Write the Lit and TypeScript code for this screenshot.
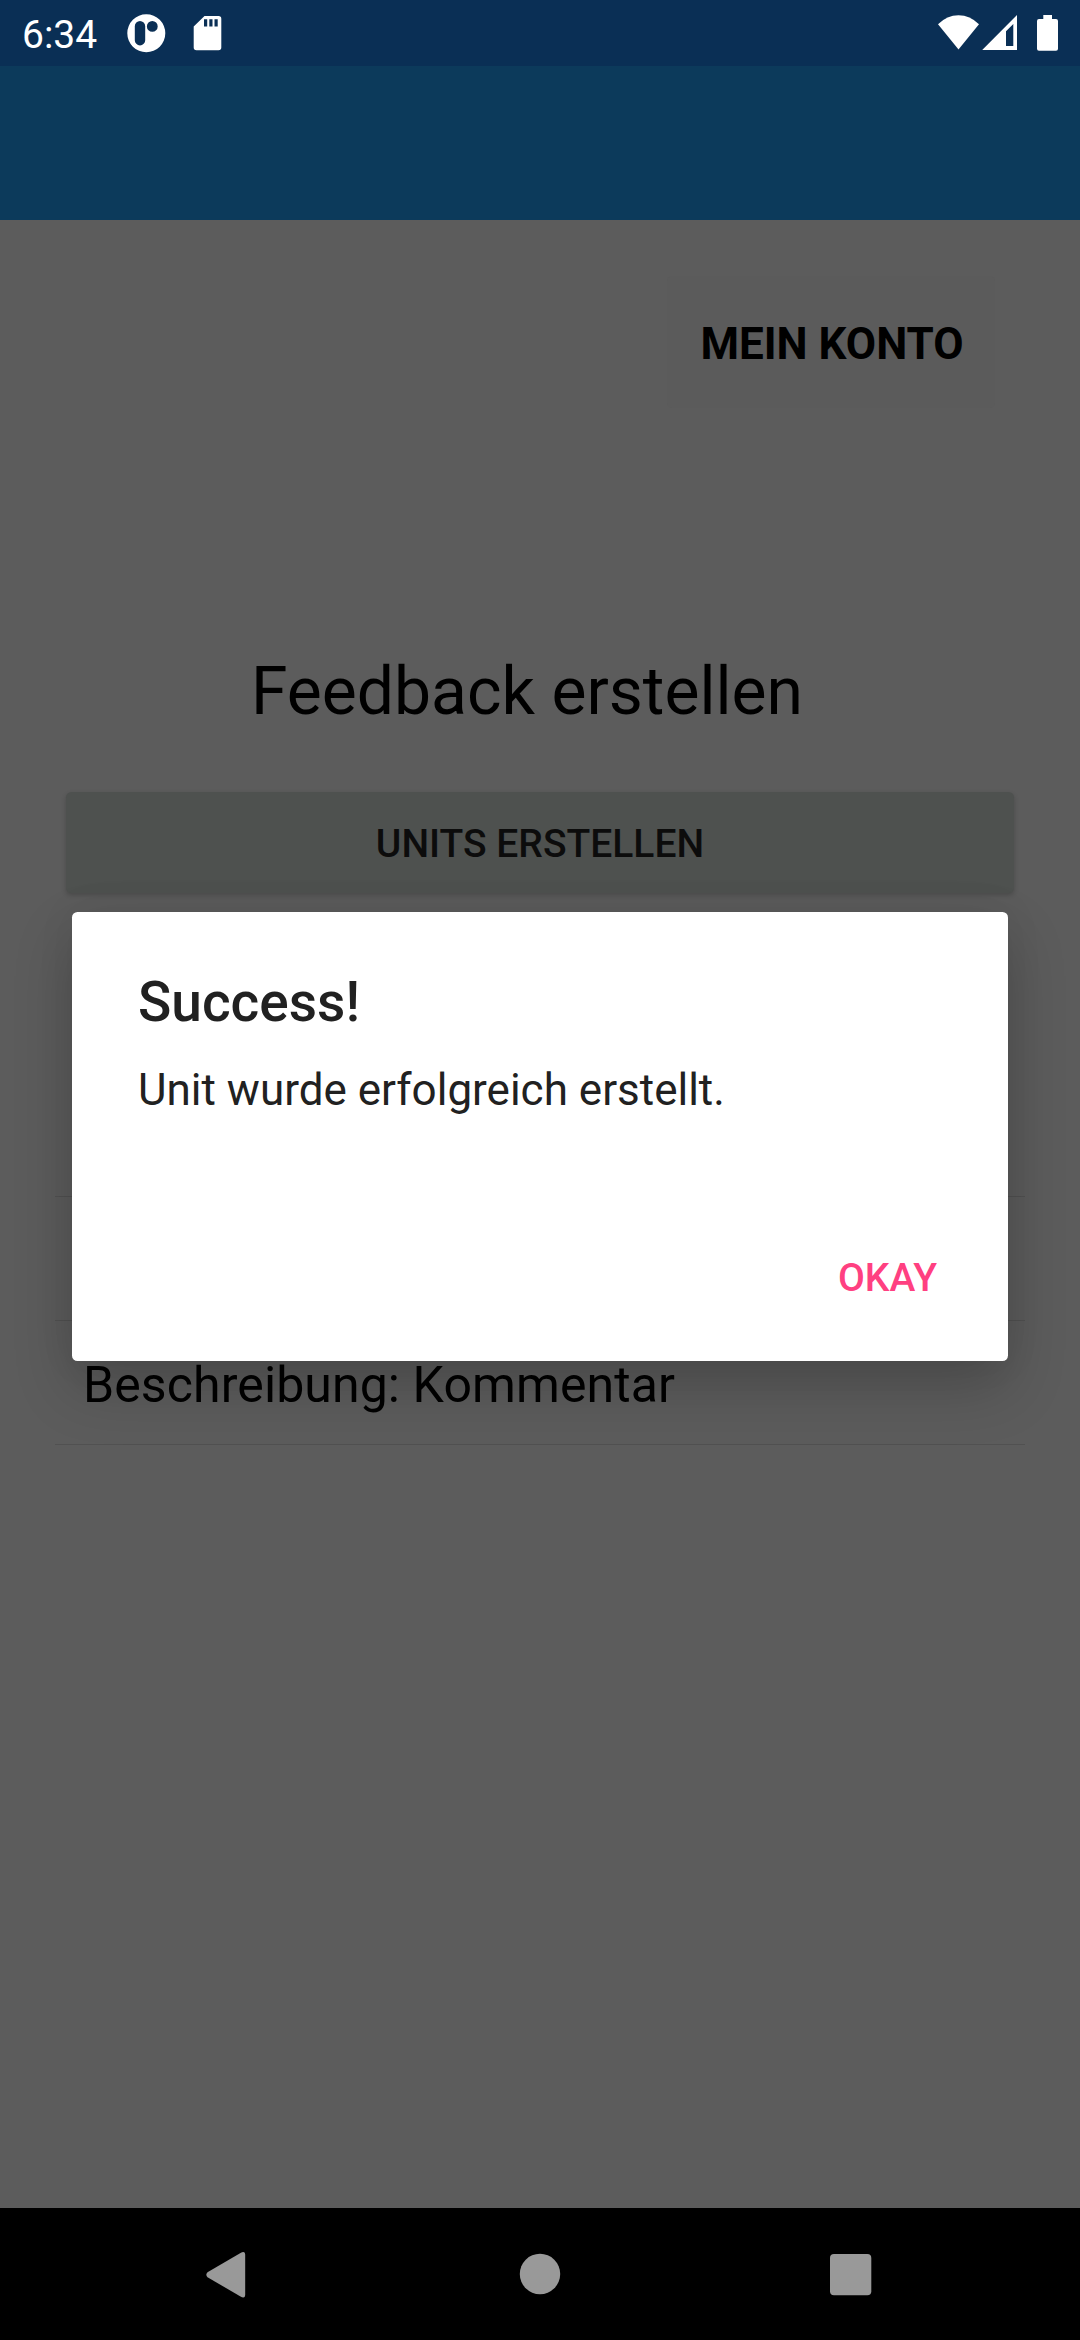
import { LitElement, html, css } from "lit";
import { customElement, property, state } from "lit/decorators.js";

@customElement("status-bar")
class StatusBar extends LitElement {
  static styles = css`
    :host { display: flex; height: 66px; background: #0a2f55; color: #fff; }
    .left, .right { display: flex; align-items: flex-start; }
    .left { flex: 1; padding-left: 22px; }
    .time { font-size: 39px; line-height: 46px; padding-top: 12px; width: 105px; box-sizing: border-box; }
    svg { display: block; height: 66px; fill: #fff; }
  `;
  render() {
    return html`
      <div class="left">
        <span class="time">6:34</span>
        <svg width="100" viewBox="127 0 100 66">
          <path fill-rule="evenodd" d="M146.300 14.300a19 19 0 1 1 0 38a19 19 0 1 1 0-38zM140 21a5.200 5.200 0 0 0-5.200 5.200v14a5.200 5.200 0 0 0 10.400 0v-14a5.200 5.200 0 0 0-5.200-5.200zM152.300 21a5.400 5.400 0 1 0 0 10.800a5.400 5.400 0 0 0 0-10.800z"/>
          <path fill-rule="evenodd" d="M204.500 16H218.500a2.800 2.800 0 0 1 2.800 2.800V47.500a2.800 2.800 0 0 1-2.800 2.800H196.500a2.800 2.800 0 0 1-2.800-2.800V26.500zM204 19.300v7.300h3.200v-7.300zM209.300 19.300v7.300h3.200v-7.300zM214.500 19.300v7.300h3.200v-7.300z"/>
        </svg>
      </div>
      <div class="right">
        <svg width="150" viewBox="930 0 150 66">
          <path d="M938 24.200Q947 15.200 958.500 15.200T979 24.200L958.500 49.500z"/>
          <path fill-rule="evenodd" d="M1017 15V50H982.200zM1013.300 24L1006 31.300V46H1013.300z"/>
          <path d="M1043.300 15h8.700v4h4a2 2 0 0 1 2 2V48.700a2 2 0 0 1-2 2h-17a2 2 0 0 1-2-2V21a2 2 0 0 1 2-2h4.300z"/>
        </svg>
      </div>`;
  }
}

@customElement("nav-bar")
class NavBar extends LitElement {
  static styles = css`
    :host { display: flex; height: 132px; background: #000; }
    svg { display: block; fill: #999; }
  `;
  render() {
    return html`<svg width="1080" height="132" viewBox="0 0 1080 132">
      <path d="M207.500 64.200L240.500 45Q245.200 42.500 245.200 47V86.500Q245.200 91 240.500 88.500L207.500 69.200Q205.200 66.700 207.500 64.200z"/>
      <circle cx="540" cy="66" r="20.200"/>
      <rect x="830" y="46" width="41.300" height="41.300" rx="4"/>
    </svg>`;
  }
}

@customElement("alert-dialog")
class AlertDialog extends LitElement {
  @property() heading = "";
  @property() message = "";
  static styles = css`
    :host {
      display: flex; flex-direction: column; box-sizing: border-box;
      width: 936px; height: 449px; margin-bottom: 1px; background: #fff; border-radius: 5.5px;
      padding: 57px 66px 0; color: #212121;
      box-shadow: 0 26px 60px rgba(0, 0, 0, 0.2), 0 0 40px rgba(0, 0, 0, 0.06);
    }
    .title { font-size: 55px; font-weight: 500; line-height: 66px; }
    .message { font-size: 44px; line-height: 52px; margin-top: 29px; }
    .actions { display: flex; justify-content: flex-end; margin-top: 139px; padding-right: 5px; }
    .action {
      border: 0; background: none; padding: 0; font: 500 39px/46px Roboto, sans-serif;
      color: #ff4081;
    }
  `;
  render() {
    return html`
      <div class="title">${this.heading}</div>
      <div class="message">${this.message}</div>
      <div class="actions">
        <button class="action" @click=${() => this.dispatchEvent(new Event("dismiss"))}>OKAY</button>
      </div>`;
  }
}

@customElement("app-root")
class AppRoot extends LitElement {
  @state() private open = true;
  private rows = ["", "", "Beschreibung: Kommentar"];

  static styles = css`
    :host {
      display: flex; flex-direction: column; width: 1080px; height: 2340px;
      font-family: Roboto, sans-serif; color: #000;
    }
    .window { flex: 1; position: relative; display: flex; flex-direction: column; background: #5c5c5c; }
    .toolbar { height: 154px; background: #0c3a5b; }
    .content { display: flex; flex-direction: column; padding: 56px 55px 0; }
    .account {
      align-self: flex-end; margin-right: 30px; width: 328px; height: 132px; padding: 4px 0 0 2px;
      box-sizing: border-box; border: 0; border-radius: 5px; background: #5b5b5b; color: #000;
      font: 700 44px/52px Roboto, sans-serif;
    }
    .headline { margin: 245px 26px 0 0; font-size: 66px; font-weight: 400; line-height: 78px; text-align: center; }
    .create {
      margin: 61px 11px 0; height: 101px; padding: 3px 0 0; border: 0; border-radius: 5.5px;
      background: #4e514f; color: #0c0c0c; font: 500 39px/46px Roboto, sans-serif;
      box-shadow: 0 2px 5px rgba(0, 0, 0, 0.2);
    }
    .list { margin-top: 180px; display: flex; flex-direction: column; }
    .row {
      height: 124px; box-sizing: border-box; border-bottom: 1px solid #515151;
      padding: 5px 0 0 28px; font-size: 50px; line-height: 118px; letter-spacing: 0.1px;
    }
    .overlay { position: absolute; inset: 0; display: flex; justify-content: center; align-items: center; }
  `;

  render() {
    return html`
      <status-bar></status-bar>
      <div class="window">
        <div class="toolbar"></div>
        <div class="content">
          <button class="account">MEIN KONTO</button>
          <h1 class="headline">Feedback erstellen</h1>
          <button class="create">UNITS ERSTELLEN</button>
          <div class="list">${this.rows.map((r) => html`<div class="row">${r}</div>`)}</div>
        </div>
        ${this.open
          ? html`<div class="overlay">
              <alert-dialog heading="Success!" message="Unit wurde erfolgreich erstellt."
                @dismiss=${() => (this.open = false)}></alert-dialog>
            </div>`
          : null}
      </div>
      <nav-bar></nav-bar>`;
  }
}
